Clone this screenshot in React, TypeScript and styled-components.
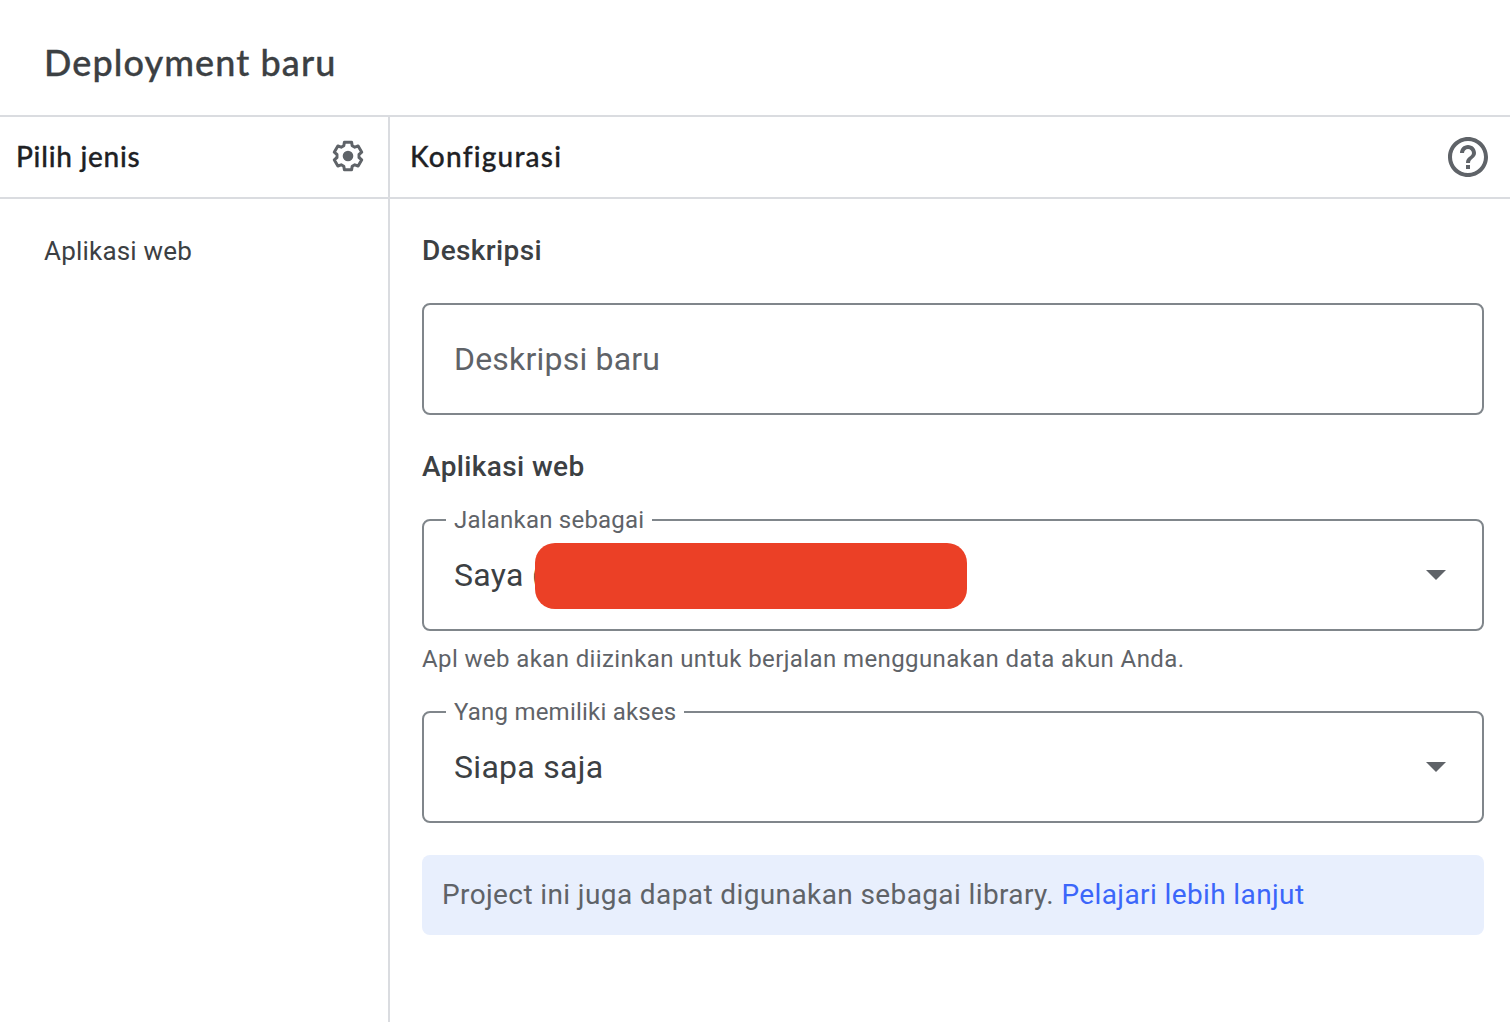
import React from 'react';
import styled, { createGlobalStyle } from 'styled-components';

const Global = createGlobalStyle`
  *, *::before, *::after { box-sizing: border-box; }
  body { margin: 0; background: #fff; font-family: Roboto, sans-serif; overflow: hidden; }
`;

const Dialog = styled.div`
  width: 1510px;
  height: 1022px;
  display: flex;
  flex-direction: column;
  background: #fff;
  color: #3c4043;
  white-space: nowrap;
`;

const Header = styled.header`
  height: 117px;
  flex: none;
  display: flex;
  align-items: center;
  padding: 9px 44px 0;
  border-bottom: 2px solid #dadce0;
`;

const Title = styled.h1`
  margin: 0;
  font: 500 36px Lato, sans-serif;
  letter-spacing: 1.1px;
  -webkit-text-stroke: 0.35px currentColor;
`;

const Body = styled.div`
  display: flex;
  flex: 1;
  min-height: 0;
`;

const Side = styled.aside`
  width: 390px;
  flex: none;
  border-right: 2px solid #dadce0;
`;

const Main = styled.main`
  flex: 1;
  min-width: 0;
`;

const Bar = styled.div<{ $left: number; $right: number }>`
  height: 82px;
  display: flex;
  align-items: center;
  justify-content: space-between;
  padding: 0 ${p => p.$right}px 0 ${p => p.$left}px;
  border-bottom: 2px solid #dadce0;
  color: #202124;
`;

const BarTitle = styled.h2<{ $spacing: number }>`
  margin: -2px 0 0;
  font: 500 28px Lato, sans-serif;
  letter-spacing: ${p => p.$spacing}px;
  -webkit-text-stroke: 0.3px currentColor;
`;

const TypeItem = styled.div`
  padding: 32px 44px;
  font-size: 26px;
  line-height: 40px;
  letter-spacing: 0.2px;
`;

const Form = styled.div`
  display: flex;
  flex-direction: column;
  padding: 32px 26px 0 32px;
`;

const Heading = styled.h3`
  margin: 0 0 32px;
  font-size: 28px;
  font-weight: 500;
  line-height: 40px;
  letter-spacing: 0.38px;
`;

const Field = styled.div<{ $placeholder?: boolean }>`
  position: relative;
  height: 112px;
  display: flex;
  align-items: center;
  justify-content: space-between;
  padding: 0 36px 0 30px;
  border: 2px solid #80868b;
  border-radius: 8px;
  font-size: 32px;
  letter-spacing: ${p => (p.$placeholder ? 0.2 : 0.3)}px;
  color: ${p => (p.$placeholder ? '#5f6368' : '#3c4043')};
`;

const TextField = styled(Field)`
  margin-bottom: 32px;
`;

const Label = styled.span`
  position: absolute;
  top: -16px;
  left: 22px;
  padding: 0 8px;
  background: #fff;
  color: #5f6368;
  font-size: 24px;
  line-height: 30px;
  letter-spacing: 0.22px;
`;

const Redaction = styled.span`
  position: absolute;
  top: 22px;
  left: 111px;
  width: 432px;
  height: 66px;
  border-radius: 20px;
  background: #eb4026;
`;

const Arrow = styled.span`
  border: 10px solid transparent;
  border-top-color: #5f6368;
  border-bottom: 0;
`;

const Helper = styled.p`
  margin: 8px 0 32px;
  font-size: 24px;
  line-height: 40px;
  letter-spacing: 0.39px;
  color: #5f6368;
`;

const Notice = styled.div`
  height: 80px;
  margin-top: 32px;
  padding: 0 20px;
  border-radius: 8px;
  background: #e8effd;
  color: #5f6368;
  font-size: 28px;
  line-height: 80px;
  letter-spacing: 0.39px;
`;

const Link = styled.a`
  color: #3b66fa;
`;

const Icon = styled.svg`
  display: block;
  flex: none;
`;

const GearSvg = styled(Icon)`
  margin-top: -2px;
`;

const GearIcon = () => (
  <GearSvg width="34" height="34" viewBox="-17 -17 34 34">
    <path
      d="M-3.6-13.8H3.6L4.2-10.3 6.8-8.8 10.15-10 13.75-3.78 11.02-1.51V1.51L13.75 3.78 10.15 10 6.8 8.8 4.2 10.3 3.6 13.8H-3.6L-4.2 10.3-6.8 8.8-10.15 10-13.75 3.78-11.02 1.51V-1.51L-13.75-3.78-10.15-10-6.8-8.8-4.2-10.3Z"
      fill="none"
      stroke="#5f6368"
      strokeWidth="3"
      strokeLinejoin="round"
    />
    <circle r="5.3" fill="#5f6368" />
  </GearSvg>
);

const HelpIcon = () => (
  <Icon width="48" height="48" viewBox="0 0 24 24" fill="#5f6368">
    <path d="M11 18h2v-2h-2v2zm1-16C6.48 2 2 6.48 2 12s4.48 10 10 10 10-4.48 10-10S17.52 2 12 2zm0 18c-4.41 0-8-3.59-8-8s3.59-8 8-8 8 3.59 8 8-3.59 8-8 8zm0-14c-2.21 0-4 1.79-4 4h2c0-1.1.9-2 2-2s2 .9 2 2c0 2-3 1.75-3 5h2c0-2.25 3-2.5 3-5 0-2.21-1.79-4-4-4z" />
  </Icon>
);

export default function App() {
  return (
    <Dialog>
      <Global />
      <Header>
        <Title>Deployment baru</Title>
      </Header>
      <Body>
        <Side>
          <Bar $left={16} $right={23}>
            <BarTitle $spacing={0.75}>Pilih jenis</BarTitle>
            <GearIcon />
          </Bar>
          <TypeItem>Aplikasi web</TypeItem>
        </Side>
        <Main>
          <Bar $left={20} $right={18}>
            <BarTitle $spacing={1.2}>Konfigurasi</BarTitle>
            <HelpIcon />
          </Bar>
          <Form>
            <Heading>Deskripsi</Heading>
            <TextField $placeholder>Deskripsi baru</TextField>
            <Heading>Aplikasi web</Heading>
            <Field>
              <Label>Jalankan sebagai</Label>
              <span>Saya (</span>
              <Redaction />
              <Arrow />
            </Field>
            <Helper>Apl web akan diizinkan untuk berjalan menggunakan data akun Anda.</Helper>
            <Field>
              <Label>Yang memiliki akses</Label>
              <span>Siapa saja</span>
              <Arrow />
            </Field>
            <Notice>
              Project ini juga dapat digunakan sebagai library. <Link>Pelajari lebih lanjut</Link>
            </Notice>
          </Form>
        </Main>
      </Body>
    </Dialog>
  );
}
